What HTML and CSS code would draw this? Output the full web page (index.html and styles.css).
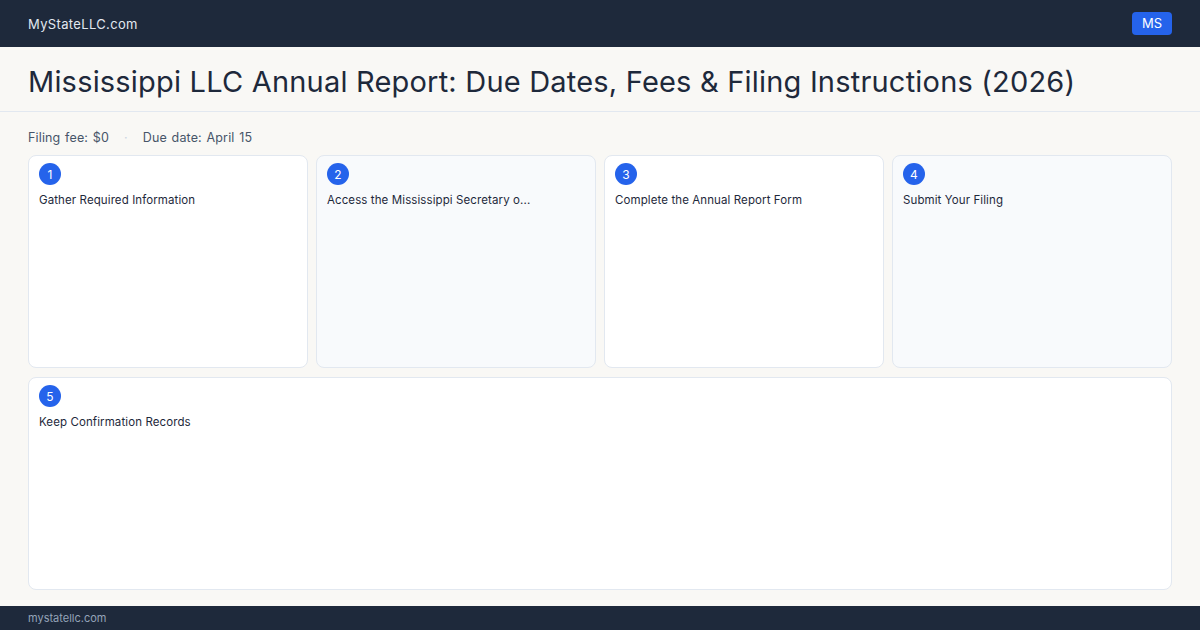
FILE: index.html
```html
<!DOCTYPE html>
<html lang="en">
<head>
    <meta charset="UTF-8">
    <meta name="viewport" content="width=device-width, initial-scale=1.0">
    <title>Mississippi LLC Annual Report</title>
    <link rel="stylesheet" href="styles.css">
</head>
<body>
    <header class="topbar">
        <span class="brand">MyStateLLC.com</span>
        <span class="state-badge">MS</span>
    </header>

    <div class="title-wrap">
        <h1>Mississippi LLC Annual Report: Due Dates, Fees &amp; Filing Instructions (2026)</h1>
    </div>

    <main class="content">
        <div class="meta">
            <span>Filing fee: $0</span>
            <span class="dot">·</span>
            <span>Due date: April 15</span>
        </div>

        <div class="steps">
            <div class="step">
                <span class="num">1</span>
                <p>Gather Required Information</p>
            </div>
            <div class="step alt">
                <span class="num">2</span>
                <p>Access the Mississippi Secretary o...</p>
            </div>
            <div class="step">
                <span class="num">3</span>
                <p>Complete the Annual Report Form</p>
            </div>
            <div class="step alt">
                <span class="num">4</span>
                <p>Submit Your Filing</p>
            </div>
            <div class="step wide">
                <span class="num">5</span>
                <p>Keep Confirmation Records</p>
            </div>
        </div>
    </main>

    <footer class="bottombar">mystatellc.com</footer>
</body>
</html>
```

FILE: styles.css
```css
html, body {
    height: 100%;
}
body {
    font-family: Inter, "Liberation Sans", sans-serif;
    margin: 0;
    background: #f9f8f5;
    color: #1e293b;
    display: flex;
    flex-direction: column;
    overflow: hidden;
}
.topbar {
    background: #1e293b;
    height: 47px;
    padding: 0 28px;
    display: flex;
    align-items: center;
    justify-content: space-between;
    flex-shrink: 0;
}
.brand {
    color: #e2e8f0;
    font-size: 13px;
    letter-spacing: 0.35px;
}
.state-badge {
    background: #2563eb;
    color: #fff;
    font-size: 13px;
    padding: 4px 10px;
    border-radius: 4px;
    line-height: 15px;
}
.title-wrap {
    padding: 4px 28px 0;
    height: 60px;
    border-bottom: 1px solid #e2e8f0;
    display: flex;
    align-items: center;
    flex-shrink: 0;
}
h1 {
    margin: 0;
    font-size: 29px;
    font-weight: 400;
    color: #1e293b;
    letter-spacing: 0.2px;
}
.content {
    flex: 1;
    padding: 16px 28px 16px;
    display: flex;
    flex-direction: column;
    min-height: 0;
}
.meta {
    font-size: 12.5px;
    color: #475569;
    display: flex;
    gap: 15px;
    height: 18px;
    align-items: center;
    letter-spacing: 0.15px;
    word-spacing: 1px;
}
.meta .dot {
    color: #cbd5e1;
}
.steps {
    flex: 1;
    margin-top: 9px;
    display: grid;
    grid-template-columns: repeat(4, 1fr);
    grid-template-rows: 1fr 1fr;
    gap: 9px 8px;
}
.step {
    background: #fff;
    border: 1px solid #e2e8f0;
    border-radius: 8px;
    padding: 7px 10px;
}
.step.alt {
    background: #f8fafc;
}
.step.wide {
    grid-column: 1 / -1;
}
.num {
    display: flex;
    align-items: center;
    justify-content: center;
    width: 22px;
    height: 22px;
    border-radius: 50%;
    background: #2563eb;
    color: #fff;
    font-size: 12px;
}
.step p {
    margin: 8px 0 0;
    font-size: 11.5px;
    color: #1e293b;
    letter-spacing: 0.1px;
}
.bottombar {
    background: #1e293b;
    color: #94a3b8;
    font-size: 11px;
    height: 24px;
    padding: 0 28px;
    display: flex;
    align-items: center;
    flex-shrink: 0;
}
```
